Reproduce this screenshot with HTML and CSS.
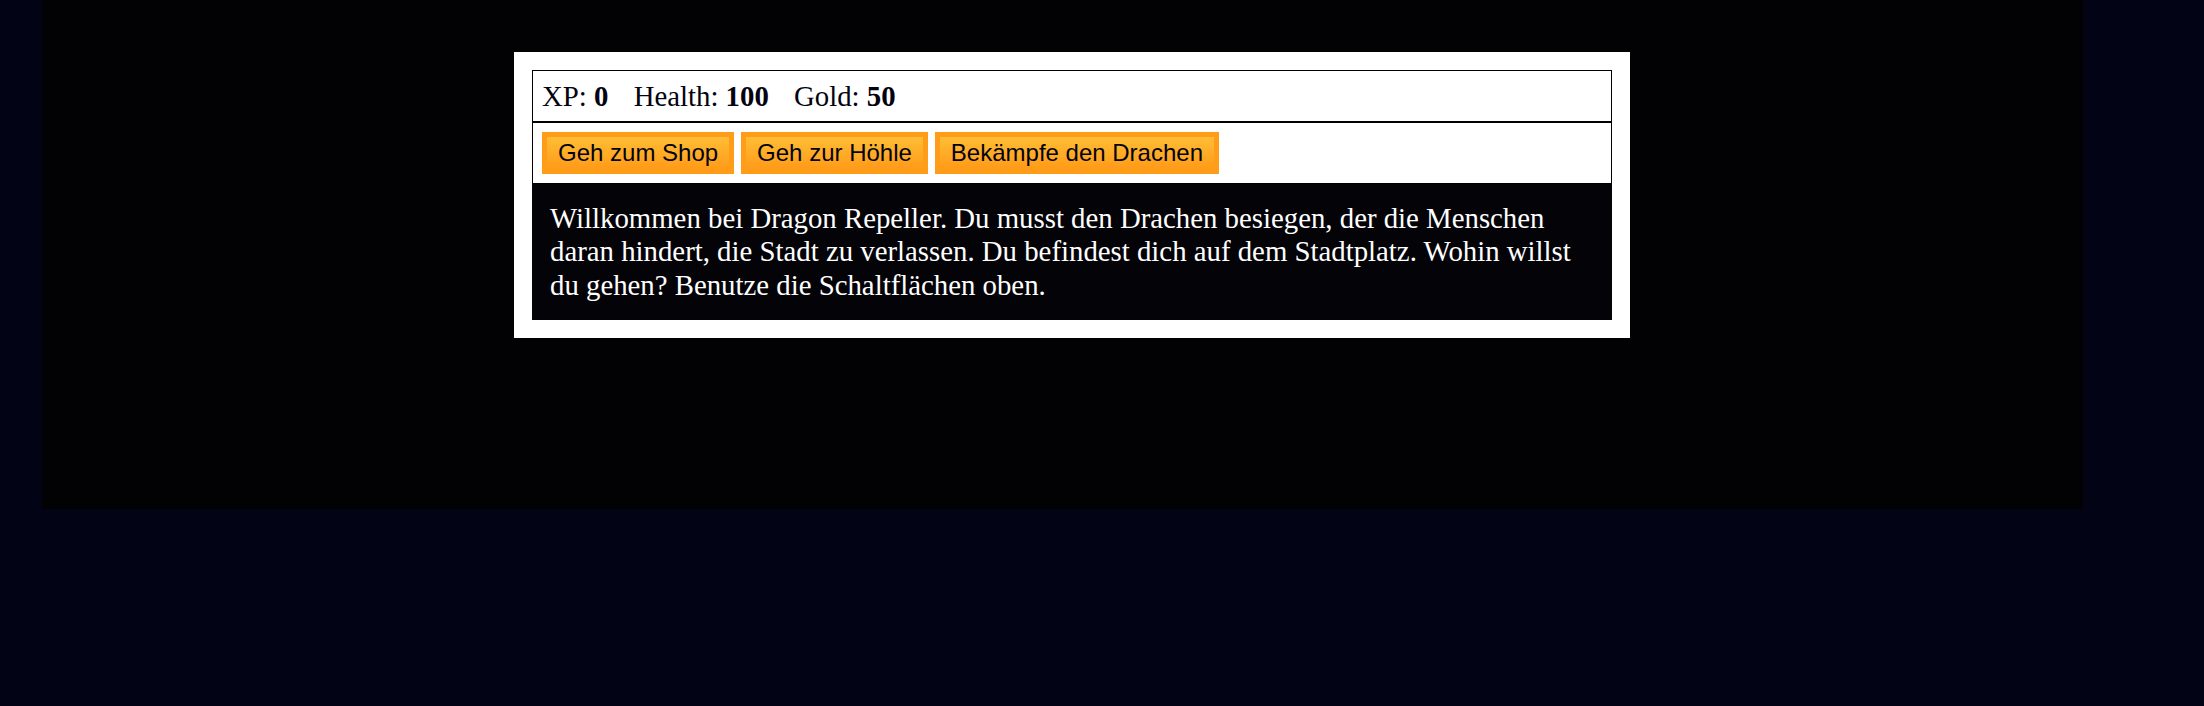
FILE: index.html
```html
<!DOCTYPE html>
<html lang="de">
<head>
<meta charset="utf-8">
<title>Dragon Repeller</title>
<link rel="stylesheet" href="styles.css">
</head>
<body>
<div class="stage">
  <div class="game">
    <div class="stats">
      <span class="stat">XP: <strong>0</strong></span>
      <span class="stat">Health: <strong>100</strong></span>
      <span class="stat">Gold: <strong>50</strong></span>
    </div>
    <div class="controls">
      <button class="btn">Geh zum Shop</button>
      <button class="btn">Geh zur Höhle</button>
      <button class="btn">Bekämpfe den Drachen</button>
    </div>
    <div class="text">Willkommen bei Dragon Repeller. Du musst den Drachen besiegen, der die Menschen daran hindert, die Stadt zu verlassen. Du befindest dich auf dem Stadtplatz. Wohin willst du gehen? Benutze die Schaltflächen oben.</div>
  </div>
</div>
</body>
</html>
```

FILE: styles.css
```css
html, body {
  margin: 0;
  padding: 0;
}

html {
  background: #030316;
}

body {
  font-family: "Liberation Serif", "Times New Roman", serif;
}

.stage {
  margin-left: 42px;
  width: 2041px;
  height: 509px;
  box-sizing: border-box;
  padding-top: 52px;
  background: #020205;
}

.game {
  margin-left: 472px;
  width: 1116px;
  box-sizing: border-box;
  padding: 18px;
  background: #ffffff;
}

.stats {
  border: 1px solid #000000;
  padding: 9px;
  color: #03030f;
  font-size: 28.8px;
  line-height: 32px;
}

.stat {
  padding-right: 18px;
}

.stats strong {
  font-weight: bold;
}

.controls {
  display: flex;
  align-items: flex-start;
  gap: 7px;
  border: 1px solid #000000;
  padding: 9px;
}

.btn {
  font-family: "Liberation Sans", Arial, Helvetica, sans-serif;
  font-size: 24px;
  line-height: 28px;
  padding: 2px 11px;
  margin: 0;
  color: #03030f;
  border: 5px solid #ff9c18;
  border-radius: 0;
  background-color: #ffac2e;
  background-image: linear-gradient(#ffbd36, #ff9b18);
  cursor: pointer;
}

.text {
  background: #030308;
  color: #ffffff;
  padding: 18px;
  font-size: 28.8px;
  line-height: 33.33px;
}
```
